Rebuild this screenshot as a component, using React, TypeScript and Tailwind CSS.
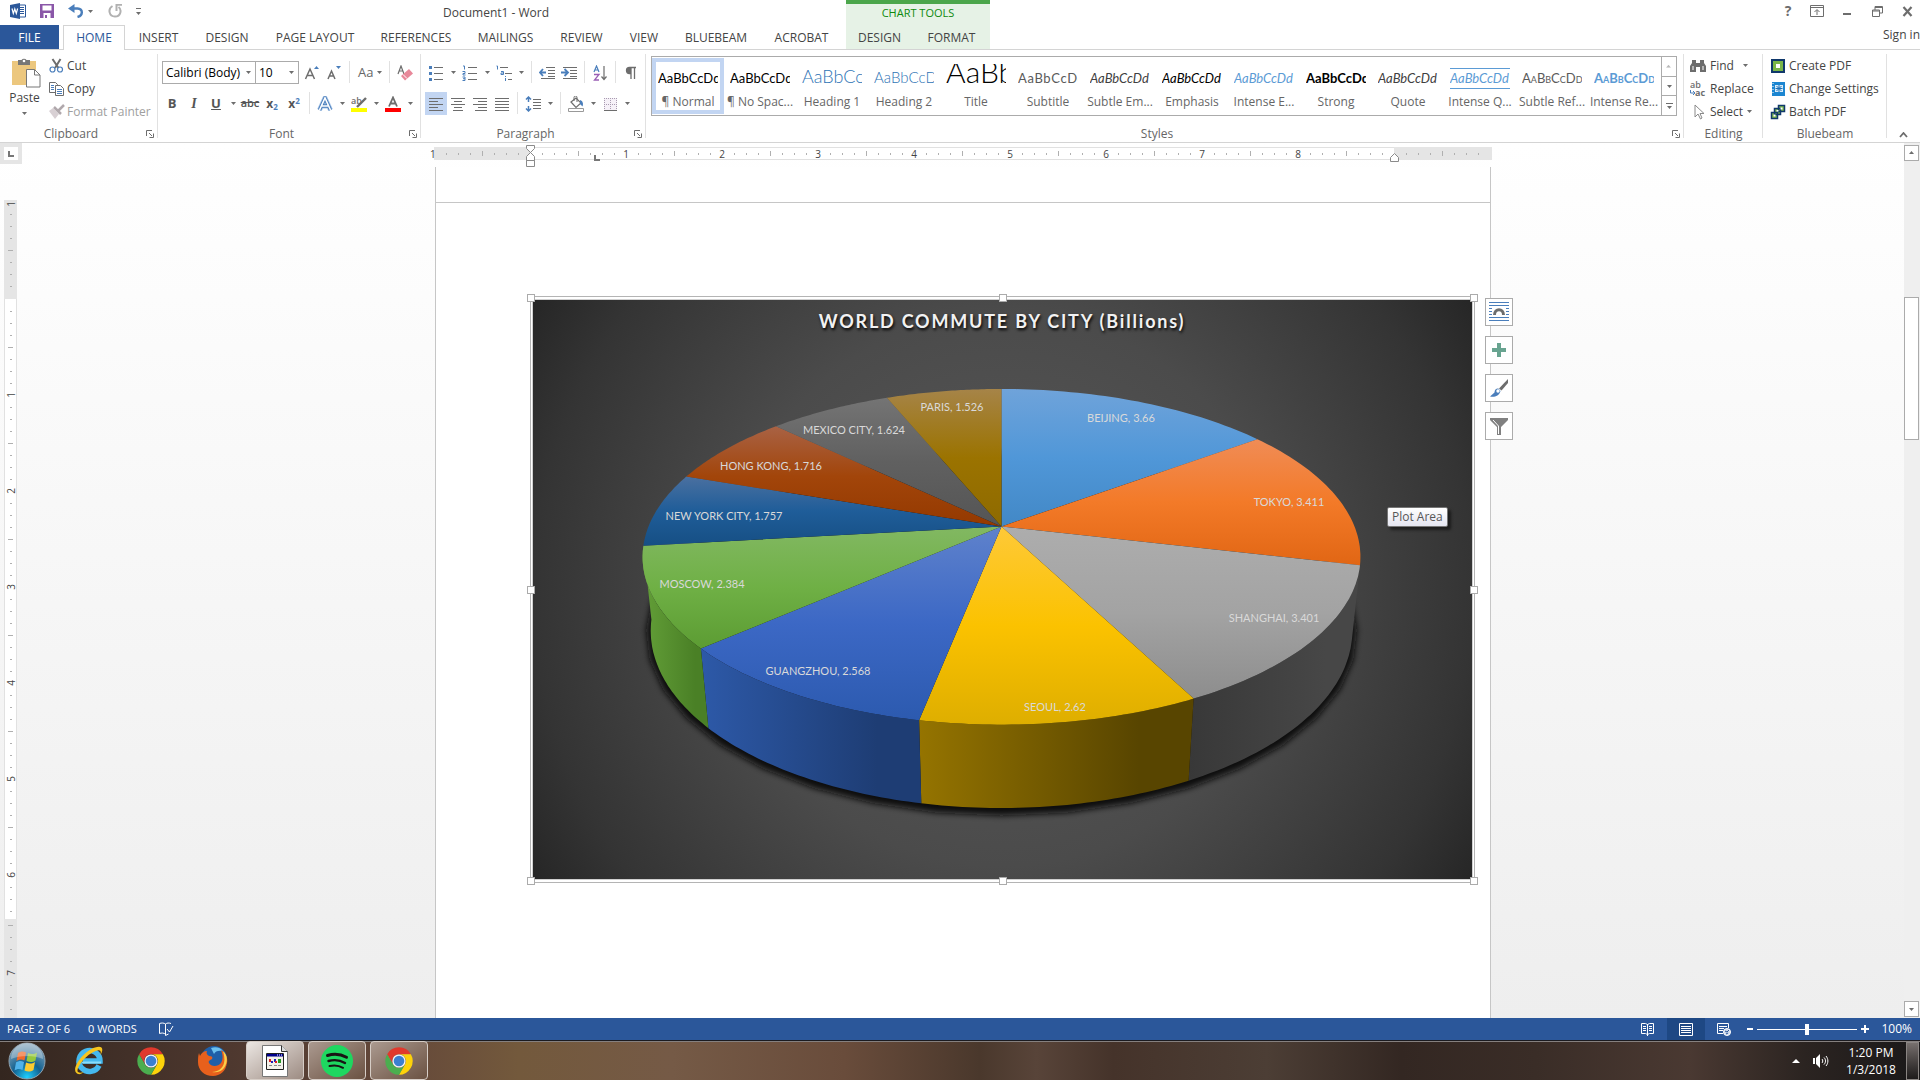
import type { ReactNode } from 'react'
import clsx from 'clsx'

const GREY = '#6d6d6d'
const BLUE = '#4a7ebb'

const tabs = [
  { label: 'INSERT', width: 'w-[67px]' },
  { label: 'DESIGN', width: 'w-[70px]' },
  { label: 'PAGE LAYOUT', width: 'w-[106px]' },
  { label: 'REFERENCES', width: 'w-24' },
  { label: 'MAILINGS', width: 'w-[83px]' },
  { label: 'REVIEW', width: 'w-[69px]' },
  { label: 'VIEW', width: 'w-14' },
  { label: 'BLUEBEAM', width: 'w-[88px]' },
  { label: 'ACROBAT', width: 'w-[83px]' },
]

const styleItems = [
  { label: '¶ Normal', look: 'text-black' },
  { label: '¶ No Spac...', look: 'text-black' },
  { label: 'Heading 1', look: 'text-[#2e74b5] text-[18px] font-light' },
  { label: 'Heading 2', look: 'text-[#2e74b5] text-[15px] font-light' },
  { label: 'Title', look: 'text-black text-[30px] font-light' },
  { label: 'Subtitle', look: 'text-[#5a5a5a] tracking-wider' },
  { label: 'Subtle Em...', look: 'text-[#404040] italic' },
  { label: 'Emphasis', look: 'text-black italic' },
  { label: 'Intense E...', look: 'text-[#5b9bd5] italic' },
  { label: 'Strong', look: 'text-black font-bold' },
  { label: 'Quote', look: 'text-[#404040] italic' },
  { label: 'Intense Q...', look: 'text-[#5b9bd5] italic', ruled: true },
  { label: 'Subtle Ref...', look: 'text-[#5a5a5a] [font-variant:small-caps]' },
  { label: 'Intense Re...', look: 'text-[#5b9bd5] font-bold [font-variant:small-caps]' },
]

// label x/y are the centre of the text inside the chart
const cities = [
  { name: 'BEIJING', value: 3.66, x: 588, y: 122, top: ['#6fa3da', '#5097d8', '#4288c6'] },
  { name: 'TOKYO', value: 3.411, x: 756, y: 206, top: ['#f08c56', '#f37a28', '#e16614'] },
  { name: 'SHANGHAI', value: 3.401, x: 741, y: 322, top: ['#adadad', '#a3a3a3', '#8d8d8d'], side: ['#383838', '#474747'] },
  { name: 'SEOUL', value: 2.62, x: 522, y: 411, top: ['#fec938', '#fbc200', '#deae00'], side: ['#957400', '#584500'] },
  { name: 'GUANGZHOU', value: 2.568, x: 285, y: 375, top: ['#5f82cc', '#3c68c5', '#2c5aaf'], side: ['#2d59a8', '#1e3d74'] },
  { name: 'MOSCOW', value: 2.384, x: 169, y: 288, top: ['#82b862', '#6fb045', '#5c9c33'], side: ['#639f38', '#4a8026'] },
  { name: 'NEW YORK CITY', value: 1.757, x: 191, y: 220, top: ['#4a70a0', '#1f5d99', '#164f84'] },
  { name: 'HONG KONG', value: 1.716, x: 238, y: 170, top: ['#a96244', '#a2450a', '#943900'] },
  { name: 'MEXICO CITY', value: 1.624, x: 321, y: 134, top: ['#747474', '#606060', '#555555'] },
  { name: 'PARIS', value: 1.526, x: 419, y: 111, top: ['#a68448', '#9b7300', '#8e6a00'] },
]

const total = cities.reduce((sum, c) => sum + c.value, 0)

// perspective projection of the unit circle, clockwise from the back
function project(angle: number, bottom = false) {
  const u = Math.sin(angle)
  const v = Math.cos(angle)
  const w = (bottom ? 1.0225 : 1) + 0.1808 * v
  const x = 468.5 + (353 * u) / w
  const y = ((bottom ? 306.2 : 226.5) - 121.4 * v) / w
  return `${x.toFixed(1)} ${y.toFixed(1)}`
}

function rim(from: number, to: number, bottom = false) {
  const steps = 40
  return Array.from({ length: steps + 1 }, (_, i) => project(from + ((to - from) * i) / steps, bottom))
}

let turned = 0
const slices = cities.map((city) => {
  const from = (turned / total) * Math.PI * 2
  turned += city.value
  const to = (turned / total) * Math.PI * 2
  return {
    ...city,
    face: `M468.5 226.5L${rim(from, to).join('L')}Z`,
    wall: `M${rim(from, to).join('L')}L${rim(to, from, true).join('L')}Z`,
  }
})

function Chart() {
  return (
    <svg viewBox="0 0 939 579" className="block h-[579px] w-full font-['Lato',sans-serif]">
      <defs>
        <radialGradient id="bg" gradientUnits="userSpaceOnUse" cx="470" cy="290" r="552">
          <stop offset="0" stopColor="#595959" />
          <stop offset="0.5" stopColor="#4b4b4b" />
          <stop offset="0.85" stopColor="#343434" />
          <stop offset="1" stopColor="#262626" />
        </radialGradient>
        <filter id="soft" x="-10%" y="-10%" width="120%" height="120%">
          <feGaussianBlur stdDeviation="3" />
        </filter>
        {slices.map((s) => (
          <linearGradient key={s.name} id={`top-${s.value}`} x1="0" y1="0" x2="0" y2="1">
            <stop offset="0" stopColor={s.top[0]} />
            <stop offset="0.5" stopColor={s.top[1]} />
            <stop offset="1" stopColor={s.top[2]} />
          </linearGradient>
        ))}
        {slices.map((s) => s.side && (
          <linearGradient key={s.name} id={`side-${s.value}`}>
            <stop offset="0" stopColor={s.side[0]} />
            <stop offset="0.8" stopColor={s.side[1]} />
          </linearGradient>
        ))}
      </defs>
      <rect width="939" height="579" fill="url(#bg)" />
      <path
        d={`M${rim(0, Math.PI * 2, true).join('L')}Z`}
        transform="translate(0 3)"
        fill="#111"
        stroke="#111"
        strokeWidth="9"
        filter="url(#soft)"
      />
      {slices.map((s) => s.side && <path key={s.name} d={s.wall} fill={`url(#side-${s.value})`} />)}
      {slices.map((s) => <path key={s.name} d={s.face} fill={`url(#top-${s.value})`} />)}
      <text
        x="469"
        y="28"
        textAnchor="middle"
        className="fill-[#f2f2f2] text-[18px] font-bold tracking-widest [text-shadow:1px_2px_3px_#000]"
      >
        WORLD COMMUTE BY CITY (Billions)
      </text>
      {slices.map((s) => (
        <text key={s.name} x={s.x} y={s.y} textAnchor="middle" className="fill-[#d9d9d9] text-[11px]">
          {s.name}, {s.value}
        </text>
      ))}
    </svg>
  )
}

function Icon({ size = 16, children }: { size?: number; children: ReactNode }) {
  return (
    <svg width={size} height={size} viewBox="0 0 16 16" fill="none" className="shrink-0" aria-hidden="true">
      {children}
    </svg>
  )
}

function Caret({ color = GREY }: { color?: string }) {
  return (
    <svg width="5" height="3" viewBox="0 0 5 3" className="shrink-0" aria-hidden="true">
      <path d="M0 0h5L2.5 3z" fill={color} />
    </svg>
  )
}

function Tool({ label, active, children }: { label: string; active?: boolean; children: ReactNode }) {
  return (
    <button
      aria-label={label}
      className={clsx('flex h-[23px] w-[22px] shrink-0 items-center justify-center', active && 'bg-[#c2d5f2]')}
    >
      {children}
    </button>
  )
}

function Drop({ label }: { label: string }) {
  return (
    <button aria-label={label} className="flex h-[23px] w-3 shrink-0 items-center justify-center">
      <Caret />
    </button>
  )
}

function Divider() {
  return <div className="mx-1 h-[22px] w-px shrink-0 bg-[#e1e1e1]" />
}

function Group({ label, width, launcher, children }: { label: string; width: string; launcher?: boolean; children: ReactNode }) {
  return (
    <section
      className={clsx(
        'relative mt-1 flex flex-col after:absolute after:top-0 after:right-0 after:bottom-1 after:w-px after:bg-[#e1e1e1]',
        width,
      )}
    >
      <div className="min-h-0 flex-1">{children}</div>
      <div className={clsx('h-4 text-center leading-[15px] text-[#666]', launcher && 'pr-4')}>{label}</div>
      {launcher && (
        <button aria-label={`${label} settings`} className="absolute right-1 bottom-1">
          <svg width="8" height="8" viewBox="0 0 8 8" fill="none" stroke={GREY}>
            <path d="M.5 6V.5H6M3 3l3 3M7.500 3.500v4h-4" />
          </svg>
        </button>
      )}
    </section>
  )
}

function TitleBar() {
  return (
    <div className="flex h-[25px] items-start">
      <div className="flex w-[443px] items-center pt-[3px] pl-[10px]">
        <svg width="16" height="16" viewBox="0 0 16 16" aria-hidden="true">
          <path d="M8 2h7.500v12H8z" fill="#fff" stroke="#2b579a" />
          <path d="M10 4.500h4M10 6.500h4M10 8.500h4M10 10.500h4" stroke="#2b579a" />
          <path d="M0 2l10-2v16L0 14z" fill="#2b579a" />
          <path d="M2 5.500l1.300 5 1.500-4.500 1.500 4.500 1.300-5" fill="none" stroke="#fff" strokeWidth="1.200" />
        </svg>
        <button aria-label="Save" className="ml-[14px]">
          <svg width="14" height="14" viewBox="0 0 14 14">
            <path d="M0 0h14v14H0z" fill="#8a57a8" />
            <path d="M2.500 1.500h9v5h-9zM3.500 9h7v5h-7z" fill="#fff" />
            <path d="M5 11h2v3H5z" fill="#8a57a8" />
          </svg>
        </button>
        <button aria-label="Undo" className="ml-[14px]">
          <svg width="16" height="14" viewBox="0 0 16 14" fill="none">
            <path d="M2 4.500h7.500c6 .5 5.500 7 0 8.500" stroke={BLUE} strokeWidth="2.400" />
            <path d="M6.500 0v9L0 4.500z" fill={BLUE} />
          </svg>
        </button>
        <button aria-label="Undo list" className="w-3 pl-1"><Caret /></button>
        <button aria-label="Repeat" className="ml-3">
          <svg width="14" height="14" viewBox="0 0 14 14" fill="none">
            <path d="M4.500 2C-.5 5 1 12.500 7 12.500c6 0 7-7 3.500-9.500" stroke="#b1b1b1" strokeWidth="2" />
            <path d="M7.500 0H14v1.800H9.500V7H7.500z" fill="#b1b1b1" />
          </svg>
        </button>
        <button aria-label="Customize toolbar" className="ml-[14px] flex flex-col items-center gap-[3px]">
          <span className="h-px w-[5px] bg-[#6d6d6d]" />
          <Caret />
        </button>
      </div>
      <h1 className="flex-1 pt-[5px] text-[12px] leading-4 text-[#444]">Document1 - Word</h1>
      <div className="flex items-center gap-3 pt-1 pr-1 text-[#6d6d6d]">
        <button aria-label="Help" className="w-4 text-[14px] leading-[14px] font-bold">?</button>
        <button aria-label="Ribbon display options" className="w-[18px] pl-[2px]">
          <svg width="14" height="12" viewBox="0 0 14 12" fill="none" stroke={GREY}>
            <path d="M.5.500h13v11H.5zM.5 2.500h13M7 10V5M4.500 7L7 4.500 9.500 7" />
          </svg>
        </button>
        <button aria-label="Minimize" className="flex h-3 w-[18px] items-end justify-center pb-[2px]"><span className="h-[2px] w-2 bg-[#6d6d6d]" /></button>
        <button aria-label="Restore" className="w-[18px] pl-1">
          <svg width="11" height="11" viewBox="0 0 11 11" fill="none" stroke={GREY}>
            <path d="M.5 4h7v6.500h-7zM.5 5h7M3 4V.500h7.500V7H8M3 1.500h7" />
          </svg>
        </button>
        <button aria-label="Close" className="w-[18px] pl-1">
          <svg width="11" height="11" viewBox="0 0 11 11" fill="none">
            <path d="M1.500 1l8 9M9.500 1l-8 9" stroke={GREY} strokeWidth="2.200" />
          </svg>
        </button>
      </div>
    </div>
  )
}

function TabRow() {
  return (
    <nav className="relative flex h-[25px] border-b border-[#d4d4d4] text-[12px] text-[#444]">
      <button className="w-[59px] bg-[#2b579a] pt-px text-white">FILE</button>
      <button className="ml-1 -mb-px w-[62px] border border-b-0 border-[#d4d4d4] bg-white text-[#2b579a]">HOME</button>
      {tabs.map((t) => (
        <button key={t.label} className={clsx('pt-px', t.width)}>{t.label}</button>
      ))}
      <div className="absolute top-[-25px] left-[846px] flex h-[49px] w-36 flex-col border-t-4 border-[#4ba64b] bg-[#e6f2e6]">
        <div className="h-[21px] pt-[1px] text-center text-[11px] leading-4 text-[#0f8a0f]">CHART TOOLS</div>
        <div className="flex flex-1">
          <button className="w-[67px] pt-px">DESIGN</button>
          <button className="flex-1 pt-px">FORMAT</button>
        </div>
      </div>
      <a href="#signin" className="ml-auto pt-[2px] leading-4">Sign in</a>
    </nav>
  )
}

function ClipboardGroup() {
  return (
    <Group label="Clipboard" width="w-[158px]" launcher>
      <div className="flex">
        <button className="flex w-[49px] flex-col items-center pt-[3px] text-[#444]">
          <svg width="29" height="31" viewBox="0 0 29 31" fill="none" className="ml-1">
            <path d="M0 4h24v24H0z" fill="#ecc77e" />
            <path d="M6 8V3h3.500a3 3 0 0 1 5 0H18v5z" fill="#777" />
            <circle cx="12" cy="4" r="1.300" fill="#fff" />
            <path d="M14.500 12.500h8l5.500 5.500v12H14.500z" fill="#fff" stroke="#777" />
            <path d="M22.500 12.500V18H28" stroke="#777" />
          </svg>
          <span className="text-[12px] leading-[20px]">Paste</span>
          <span className="pt-[4px]"><Caret /></span>
        </button>
        <div className="flex flex-col text-[#444]">
          <button className="flex h-[23px] items-center gap-[2px]">
            <Icon>
              <path d="M3.500 1l6 9M11.500 1L6 10" stroke={GREY} strokeWidth="2" />
              <circle cx="3.500" cy="11.500" r="2.500" stroke={BLUE} strokeWidth="1.200" />
              <circle cx="11" cy="11.500" r="2.500" stroke={BLUE} strokeWidth="1.200" />
            </Icon>
            Cut
          </button>
          <button className="flex h-[23px] items-center gap-[2px]">
            <Icon>
              <path d="M.5 1.500h6l2 2v8h-8z" fill="#fff" stroke={GREY} />
              <path d="M6.500 4.500h5l3 3v7h-8z" fill="#fff" stroke={GREY} />
              <path d="M2 4.500h3M2 6.500h3M2 8.500h3M8 8.500h5M8 10.500h5M8 12.500h5" stroke={BLUE} />
            </Icon>
            Copy
          </button>
          <button className="flex h-[23px] items-center gap-[2px] text-[#a0a0a0]">
            <Icon>
              <path d="M0 7l4-3 6 6-4 5z" fill="#d8d0d4" />
              <path d="M5 3l7 7M9 7l6-6" stroke="#b0a8ac" strokeWidth="2.500" />
            </Icon>
            Format Painter
          </button>
        </div>
      </div>
    </Group>
  )
}

function FontGroup() {
  return (
    <Group label="Font" width="w-[263px]" launcher>
      <div className="mt-[7px] flex h-[23px] pl-1">
        <label className="relative flex">
          <select aria-label="Font name" className="h-[23px] w-[94px] appearance-none border border-[#ababab] bg-white pl-[3px] text-[12px] text-black">
            <option>Calibri (Body)</option>
          </select>
          <span className="pointer-events-none absolute top-[10px] right-[5px]"><Caret /></span>
        </label>
        <label className="relative -ml-px flex">
          <select aria-label="Font size" className="h-[23px] w-[44px] appearance-none border border-[#ababab] bg-white pl-[3px] text-[12px] text-black">
            <option>10</option>
          </select>
          <span className="pointer-events-none absolute top-[10px] right-[5px]"><Caret /></span>
        </label>
        <div className="w-[2px]" />
        <Tool label="Grow font">
          <Icon>
            <path d="M1.500 14L6 4l4.500 10M3.300 10.500h5.400" stroke={GREY} strokeWidth="1.500" />
            <path d="M10 4l2.500-3L15 4z" fill={BLUE} />
          </Icon>
        </Tool>
        <Tool label="Shrink font">
          <Icon>
            <path d="M2 14L5.500 6 9 14M3.500 11h4" stroke={GREY} strokeWidth="1.500" />
            <path d="M10 1h5l-2.500 3z" fill={BLUE} />
          </Icon>
        </Tool>
        <Divider />
        <button className="ml-1 text-[13px] text-[#666]">Aa</button>
        <Drop label="Change case" />
        <Divider />
        <Tool label="Clear formatting">
          <Icon>
            <path d="M1 9L4 1l3 8M2 6h4" stroke={GREY} strokeWidth="1.200" />
            <path d="M4 11l8-7 4 4.500-8 7z" fill="#e8889a" />
            <path d="M6 9.500l4 4" stroke="#fff" />
          </Icon>
        </Tool>
      </div>
      <div className="mt-2 flex h-[23px] pl-[3px] text-[#555]">
        <Tool label="Bold"><span className="text-[13px] font-bold">B</span></Tool>
        <Tool label="Italic"><span className="font-['Liberation_Serif',serif] text-[14px] font-bold italic">I</span></Tool>
        <Tool label="Underline"><span className="text-[13px] font-bold underline">U</span></Tool>
        <Drop label="Underline style" />
        <Tool label="Strikethrough"><span className="text-[11px] font-semibold line-through">abc</span></Tool>
        <Tool label="Subscript"><span className="text-[12px] font-bold">x<sub className="text-[8px] text-[#4a7ebb]">2</sub></span></Tool>
        <Tool label="Superscript"><span className="text-[12px] font-bold">x<sup className="text-[8px] text-[#4a7ebb]">2</sup></span></Tool>
        <Divider />
        <Tool label="Text effects">
          <Icon>
            <path d="M2.500 14L8 2l5.500 12M5 10h6" stroke="#a9c6e8" strokeWidth="5" strokeLinejoin="round" />
            <path d="M2.500 14L8 2l5.500 12M5 10h6" stroke={BLUE} strokeWidth="3.400" />
            <path d="M2.500 14L8 2l5.500 12M5 10h6" stroke="#fff" strokeWidth="1.600" />
          </Icon>
        </Tool>
        <Drop label="Text effects list" />
        <Tool label="Highlight">
          <Icon>
            <text x="0" y="8" fontSize="9" fontWeight="600" fill={GREY}>ab</text>
            <path d="M15 2L8 9l-2 2" stroke={GREY} strokeWidth="2.400" />
            <path d="M0 12h16v4H0z" fill="#ffff00" />
          </Icon>
        </Tool>
        <Drop label="Highlight colour" />
        <Tool label="Font colour">
          <Icon>
            <path d="M4 10.500L8 1.500l4 9M5.500 7.500h5" stroke={GREY} strokeWidth="1.800" />
            <path d="M0 12h16v4H0z" fill="#ff0000" />
          </Icon>
        </Tool>
        <Drop label="Font colour list" />
      </div>
    </Group>
  )
}

function ParagraphGroup() {
  return (
    <Group label="Paragraph" width="w-[225px]" launcher>
      <div className="mt-[7px] flex h-[23px] pl-1">
        <Tool label="Bullets">
          <Icon>
            <path d="M6 2.500h9M6 8.500h9M6 14.500h9" stroke={GREY} />
            <path d="M1 1h3v3H1zM1 7h3v3H1zM1 13h3v3H1z" fill={BLUE} />
          </Icon>
        </Tool>
        <Drop label="Bullet library" />
        <Tool label="Numbering">
          <Icon>
            <path d="M6 2.500h9M6 8.500h9M6 14.500h9" stroke={GREY} />
            <path d="M1 1h1.500v3.500M.5 6.500H3v2H1V10h2.500M.5 12H3v3.500H.5M1 13.700h2" stroke={BLUE} />
          </Icon>
        </Tool>
        <Drop label="Numbering library" />
        <Tool label="Multilevel list">
          <Icon>
            <path d="M4 2.500h8M9 8.500h7M12 14.500h4" stroke={GREY} />
            <path d="M.5 1h1v3.500M5 6.500h2.500v3H5V8h2.500M9.500 11v1M9.500 13v3" stroke={BLUE} />
          </Icon>
        </Tool>
        <Drop label="Multilevel library" />
        <Divider />
        <Tool label="Decrease indent">
          <Icon>
            <path d="M7 2.500h9M9 5.500h7M9 8.500h7M9 11.500h7M2 13.500h14" stroke={GREY} />
            <path d="M7 7.500H1M4 4L1 7.500 4 11" stroke={BLUE} strokeWidth="1.800" />
          </Icon>
        </Tool>
        <Tool label="Increase indent">
          <Icon>
            <path d="M2 2.500h14M9 5.500h7M9 8.500h7M9 11.500h7M2 13.500h14" stroke={GREY} />
            <path d="M0 7.500h6M3.500 4L7 7.500 3.500 11" stroke={BLUE} strokeWidth="1.800" />
          </Icon>
        </Tool>
        <Divider />
        <Tool label="Sort">
          <Icon>
            <path d="M2 7l2.500-6L7 7M3 5h3" stroke={BLUE} strokeWidth="1.200" />
            <path d="M2 9.500h5L2.500 15H7" stroke="#9a5fb5" strokeWidth="1.300" />
            <path d="M12 1v13M9.500 11.500L12 14.500l2.500-3" stroke={GREY} strokeWidth="1.200" />
          </Icon>
        </Tool>
        <Divider />
        <Tool label="Show marks">
          <Icon>
            <path d="M13 2.500H6.500a3 3 0 0 0 0 6H8V14M8 2v12M11.500 2.500V14" stroke={GREY} strokeWidth="1.300" />
            <path d="M8 2.500H6.500a3 3 0 0 0 0 6H8z" fill={GREY} />
          </Icon>
        </Tool>
      </div>
      <div className="mt-2 flex h-[23px] pl-1">
        <Tool label="Align left" active>
          <Icon><path d="M1 2.500h14M1 5.500h9M1 8.500h14M1 11.500h9M1 14.500h14" stroke={GREY} /></Icon>
        </Tool>
        <Tool label="Centre">
          <Icon><path d="M1 2.500h14M4 5.500h8M1 8.500h14M4 11.500h8M3 14.500h10" stroke={GREY} /></Icon>
        </Tool>
        <Tool label="Align right">
          <Icon><path d="M1 2.500h14M6 5.500h9M1 8.500h14M6 11.500h9M3 14.500h12" stroke={GREY} /></Icon>
        </Tool>
        <Tool label="Justify">
          <Icon><path d="M1 2.500h14M1 5.500h14M1 8.500h14M1 11.500h14M1 14.500h14" stroke={GREY} /></Icon>
        </Tool>
        <Divider />
        <Tool label="Line spacing">
          <Icon>
            <path d="M8 3.500h8M8 6.500h8M8 9.500h8M8 12.500h8" stroke={GREY} />
            <path d="M3.500 1v5M1 3.500L3.500 1 6 3.500M3.500 10v5M1 12.500L3.500 15 6 12.500" stroke={BLUE} strokeWidth="1.500" />
          </Icon>
        </Tool>
        <Drop label="Line spacing list" />
        <Divider />
        <Tool label="Shading">
          <Icon>
            <path d="M3 6l5-4 5 5-5 4.500z" stroke={GREY} strokeWidth="1.200" />
            <path d="M6 5V1.500a1.500 1.500 0 0 1 3 0V6" stroke={GREY} />
            <path d="M12 4c3 1 3.500 4 2.500 6.500L12 8z" fill={BLUE} />
            <path d="M.5 12.500h15v3H.5z" fill="#fff" stroke="#999" />
          </Icon>
        </Tool>
        <Drop label="Shading colour" />
        <Tool label="Borders">
          <Icon>
            <path d="M2 2h13v12H2z" fill="#f6f1f8" />
            <path d="M2 2.500h13M2 8.500h13M2.500 2v12M8.500 2v12M14.500 2v12" stroke="#a89bb0" strokeDasharray="1 1" />
            <path d="M2 14.500h13" stroke={GREY} />
          </Icon>
        </Tool>
        <Drop label="Border list" />
      </div>
    </Group>
  )
}

function StylesGroup() {
  return (
    <Group label="Styles" width="min-w-0 flex-1" launcher>
      <div className="mt-[2px] mr-[7px] ml-[5px] flex h-[60px] border border-[#ababab]">
        <div className="flex min-w-0 flex-1 overflow-hidden">
          {styleItems.map((s, i) => (
            <button
              key={s.label}
              className={clsx('mt-px h-14 w-[72px] shrink-0 border-4 px-[2px]', i === 0 ? 'border-[#c2d5f2]' : 'border-transparent')}
            >
              <div className="relative mt-[2px] h-[27px] overflow-hidden text-left font-['Lato',sans-serif] text-[13px] leading-[29px] whitespace-nowrap">
                <span className={clsx('leading-[0]', s.look)}>AaBbCcDd</span>
                {s.ruled && <span className="absolute inset-x-0 top-1 h-[21px] border-y border-[#5b9bd5]" />}
              </div>
              <div className="flex justify-center pt-[2px] leading-[17px] whitespace-nowrap text-[#666]">{s.label}</div>
            </button>
          ))}
        </div>
        <div className="flex w-[15px] shrink-0 flex-col border-l border-[#ababab]">
          <button aria-label="Scroll styles up" className="flex flex-1 rotate-180 items-center justify-center"><Caret color="#b8b8b8" /></button>
          <button aria-label="Scroll styles down" className="flex flex-1 items-center justify-center border-y border-[#ababab]"><Caret /></button>
          <button aria-label="More styles" className="flex flex-1 flex-col items-center justify-center gap-[2px]">
            <span className="h-px w-[7px] bg-[#6d6d6d]" />
            <Caret />
          </button>
        </div>
      </div>
    </Group>
  )
}

function EditingGroups() {
  return (
    <>
      <Group label="Editing" width="w-[79px]">
        <div className="flex flex-col pl-[6px] text-[#444]">
          <button className="flex h-[23px] items-center gap-1">
            <Icon>
              <path d="M2 2h4v3h4V2h4v3l2 3v6h-6V9H6v5H0V8l2-3z" fill={GREY} />
              <path d="M3 8v4M13 8v4" stroke="#fff" />
            </Icon>
            Find
            <span className="pl-[5px]"><Caret /></span>
          </button>
          <button className="flex h-[23px] items-center gap-1">
            <Icon>
              <text x="0" y="7" fontSize="9" fontWeight="600" fill={GREY}>ab</text>
              <text x="5" y="15" fontSize="9" fontWeight="700" fill={GREY}>ac</text>
              <path d="M.5 9v3h4M3 10l2 2-2 2" stroke={BLUE} />
            </Icon>
            Replace
          </button>
          <button className="flex h-[23px] items-center gap-1">
            <Icon><path d="M5 1v12l3-3 2.500 5 1.500-1-2-4.500h4z" stroke="#8a8a8a" /></Icon>
            Select
            <Caret />
          </button>
        </div>
      </Group>
      <Group label="Bluebeam" width="w-[124px]">
        <div className="flex flex-col pl-[7px] text-[#444]">
          <button className="flex h-[23px] items-center gap-[3px]">
            <Icon>
              <path d="M1 1h14v14H1z" fill="#10386b" />
              <path d="M3 3h10v10H3z" fill="#7ab648" />
              <path d="M6 6h4v4H6z" fill="#fff" />
            </Icon>
            Create PDF
          </button>
          <button className="flex h-[23px] items-center gap-[3px]">
            <Icon>
              <path d="M2 1h13v14H2z" fill="#1c86d1" />
              <path d="M5 4h8v7H5z" fill="#d8ecfa" />
              <path d="M9 4v7M5.500 7.500h7M6.500 5l5 5M11.500 5l-5 5" stroke="#1c6fb5" />
              <path d="M3 2v12" stroke="#fff" strokeDasharray="1 2" />
            </Icon>
            Change Settings
          </button>
          <button className="flex h-[23px] items-center gap-[3px]">
            <Icon>
              <path d="M8.500 1.500h6v6h-6zM4.500 4.500h6v6h-6zM1.500 8.500h6v6h-6z" fill="#7ab648" stroke="#10386b" strokeWidth="1.500" />
              <path d="M3.500 10.500h2v2h-2zM10.500 3.500h2v2h-2zM6.500 6h2v1.500h-2z" fill="#fff" />
            </Icon>
            Batch PDF
          </button>
        </div>
      </Group>
      <div className="flex w-[33px] items-end justify-center pb-1">
        <button aria-label="Collapse ribbon">
          <svg width="9" height="6" viewBox="0 0 9 6" fill="none"><path d="M1 5l3.500-4L8 5" stroke={GREY} strokeWidth="1.800" /></svg>
        </button>
      </div>
    </>
  )
}

// one cell per eighth of an inch, numbered on the whole inch
function Ticks({ count, start = 1, vertical }: { count: number; start?: number; vertical?: boolean }) {
  return (
    <>
      {Array.from({ length: count }, (_, i) => i + start).map((n) => (
        <span
          key={n}
          className={clsx(
            'flex shrink-0 items-center justify-center text-[10px] leading-none text-[#444]',
            vertical ? 'h-3 w-full' : 'h-full w-3',
          )}
        >
          {n % 8 === 0 ? (
            <span className={vertical ? '-rotate-90' : ''}>{n / 8}</span>
          ) : (
            <span
              className={clsx(
                'bg-[#b0b0b0]',
                vertical ? 'h-px' : 'w-px',
                n % 4 === 0 ? (vertical ? 'w-[5px]' : 'h-[5px]') : vertical ? 'w-[2px]' : 'h-[2px]',
              )}
            />
          )}
        </span>
      ))}
    </>
  )
}

function HorizontalRuler() {
  return (
    <div className="relative mx-auto mt-1 flex h-[13px] w-[1058px]">
      <div className="flex w-24 bg-[#e5e5e5]">
        <span className="-ml-1 flex w-[10px] items-center text-[10px] leading-none text-[#444]">1</span>
        <Ticks count={7} />
      </div>
      <div className="flex w-[864px] overflow-hidden border-y border-[#e1e1e1] bg-white pl-[6px]"><Ticks count={71} /></div>
      <div className="flex flex-1 overflow-hidden bg-[#e5e5e5] pl-[6px]"><Ticks count={7} /></div>
      <svg width="9" height="22" viewBox="0 0 9 22" fill="#fff" stroke="#8a8a8a" className="absolute -top-[2px] left-[92px]">
        <path d="M.5.500h8v3l-4 4-4-4zM.5 15.500v-4l4-4 4 4v4zM.5 15.500h8v6h-8z" />
      </svg>
      <svg width="9" height="9" viewBox="0 0 9 9" fill="#fff" stroke="#8a8a8a" className="absolute top-[6px] left-[956px]">
        <path d="M.5 8.500v-4l4-4 4 4v4z" />
      </svg>
      <span className="absolute top-2 left-[160px] h-[6px] w-[6px] border-b-2 border-l-2 border-[#777]" />
    </div>
  )
}

function VerticalRuler() {
  return (
    <div className="mt-[33px] ml-1 flex w-[13px] flex-col overflow-hidden">
      <div className="flex h-[99px] shrink-0 flex-col bg-[#e5e5e5]">
        <span className="flex h-2 shrink-0 items-center justify-center text-[10px] leading-none text-[#444]"><span className="-rotate-90">1</span></span>
        <Ticks count={7} vertical />
      </div>
      <div className="flex h-[620px] shrink-0 flex-col overflow-hidden border-x border-[#e1e1e1] bg-white pt-[6px]"><Ticks count={51} vertical /></div>
      <div className="flex flex-1 flex-col overflow-hidden bg-[#e5e5e5]"><Ticks count={9} start={52} vertical /></div>
    </div>
  )
}

function ChartButtons() {
  const box = 'flex size-7 items-center justify-center border border-[#ababab] bg-white'
  return (
    <div className="absolute top-px left-[954px] flex flex-col gap-[10px]">
      <button aria-label="Layout options" className={box}>
        <svg width="20" height="20" viewBox="0 0 20 20" fill="none" stroke={BLUE}>
          <path d="M0 .5h20M0 3.500h20M0 6.500h3M0 9.500h3M0 12.500h3M17 6.500h3M17 9.500h3M17 12.500h3M0 15.500h20M0 18.500h20" />
          <path d="M5.500 13c0-7 9-7 9 0" stroke={GREY} strokeWidth="3" />
        </svg>
      </button>
      <button aria-label="Chart elements" className={box}>
        <svg width="14" height="14" viewBox="0 0 14 14"><path d="M5 0h4v5h5v4H9v5H5V9H0V5h5z" fill="#68a490" /></svg>
      </button>
      <button aria-label="Chart styles" className={box}>
        <svg width="18" height="18" viewBox="0 0 18 18" fill="none">
          <path d="M18 0v4l-6.500 7.500-2.500-2z" fill={GREY} />
          <path d="M8.500 9.500c-3 0-3.500 1-4 4L0 17.500c4 .5 9 .5 10.500-5.500z" fill={BLUE} />
          <circle cx="8" cy="12" r="1.700" fill="#fff" />
        </svg>
      </button>
      <button aria-label="Chart filters" className={box}>
        <svg width="18" height="17" viewBox="0 0 18 17"><path d="M0 0h18v2l-7 7v8H7V9L0 2z" fill="#808080" /><path d="M3 2l5.500 6v8" fill="none" stroke="#fff" /></svg>
      </button>
    </div>
  )
}

const handles = [
  '-top-[3px] -left-1',
  '-top-[3px] left-1/2 -ml-1',
  '-top-[3px] -right-1',
  'top-1/2 -mt-1 -left-1',
  'top-1/2 -mt-1 -right-1',
  '-bottom-[3px] -left-1',
  '-bottom-[3px] left-1/2 -ml-1',
  '-bottom-[3px] -right-1',
]

function Document() {
  return (
    <main className="flex min-h-0 flex-1 bg-linear-to-b from-white to-[#eeeeee]">
      <div className="flex min-w-0 flex-1 flex-col overflow-hidden">
        <div className="flex h-6 shrink-0">
          <button aria-label="Tab selector" className="flex h-[21px] w-[22px] shrink-0 items-center justify-center border-4 border-[#e5e5e5] bg-white">
            <span className="h-[6px] w-[6px] border-b-2 border-l-2 border-[#777]" />
          </button>
          <div className="min-w-0 flex-1"><HorizontalRuler /></div>
        </div>
        <div className="flex min-h-0 flex-1">
          <div className="flex w-[22px] shrink-0"><VerticalRuler /></div>
          <div className="min-w-0 flex-1 overflow-hidden">
            <div className="mx-auto h-full w-[1056px] border-x border-[#c6c6c6] bg-white">
              <div className="h-9 border-b border-[#c6c6c6]" />
              <div className="relative mt-[93px] ml-[94px] w-[945px] border border-[#b4b4b4] px-px py-[2px]">
                <div className="border border-[#d0d0d0]"><Chart /></div>
                {handles.map((pos) => (
                  <span key={pos} className={clsx('absolute size-2 border border-[#ababab] bg-white', pos)} />
                ))}
                <ChartButtons />
                <div
                  role="tooltip"
                  className="absolute top-[210px] left-[856px] rounded-xs border border-[#767676] bg-linear-to-b from-white to-[#e4e5f0] px-1 text-[12px] leading-[18px] text-[#575757] shadow-[3px_3px_3px_rgba(0,0,0,0.500)]"
                >
                  Plot Area
                </div>
              </div>
            </div>
          </div>
        </div>
      </div>
      <div className="flex w-4 shrink-0 flex-col bg-[#efefef] pt-[2px] pb-px">
        <button aria-label="Scroll up" className="flex h-4 w-[15px] rotate-180 items-center justify-center border border-[#ababab] bg-white"><Caret /></button>
        <div className="mt-[136px] h-[143px] w-[15px] border border-[#ababab] bg-white" />
        <button aria-label="Scroll down" className="mt-auto flex h-4 w-[15px] items-center justify-center border border-[#ababab] bg-white"><Caret /></button>
      </div>
    </main>
  )
}

function StatusBar() {
  return (
    <div className="flex h-[22px] shrink-0 items-center bg-[#2b579a] pr-2 pl-[7px] text-white">
      <span className="w-[81px] text-[11px]">PAGE 2 OF 6</span>
      <span className="w-[71px] text-[11px]">0 WORDS</span>
      <button aria-label="Proofing">
        <svg width="15" height="14" viewBox="0 0 15 14" fill="none" stroke="#fff">
          <path d="M6.500 2C5 .8 2.500.8.500 1.500v10c2-.7 4.500-.7 6 .700M6.500 2v11.500M6.500 2C8 .8 10 .8 12 1.500M6.500 13.500l3-1.500M8 7l2.500 3L14 4" />
        </svg>
      </button>
      <div className="ml-auto flex h-full items-center">
        <button aria-label="Read mode" className="flex h-full w-[38px] items-center justify-center">
          <svg width="14" height="13" viewBox="0 0 14 13" fill="none" stroke="#fff">
            <path d="M6.500 1.500L4.500.500h-4v10h4l2 1 2-1h4V.500h-4zM6.500 1v12M2 3.500h3M2 5.500h3M2 7.500h3M8 3.500h3M8 5.500h3M8 7.500h3" />
          </svg>
        </button>
        <button aria-label="Print layout" className="flex h-full w-[38px] items-center justify-center bg-[#1e4884]">
          <svg width="14" height="13" viewBox="0 0 14 13" fill="none" stroke="#fff"><path d="M.5.500h13v12H.5zM2 3.500h10M2 5.500h10M2 7.500h10M2 9.500h10" /></svg>
        </button>
        <button aria-label="Web layout" className="flex h-full w-[38px] items-center justify-center">
          <svg width="14" height="13" viewBox="0 0 14 13" fill="none" stroke="#fff">
            <path d="M6 10.500H.5V.500h11V5M2 3.500h8M2 5.500h5M2 7.500h4" />
            <circle cx="10" cy="9" r="3.500" fill="#c9d6ea" />
            <path d="M8 8l2 1 2-2M9 11l2-1" stroke="#2b579a" />
          </svg>
        </button>
        <button aria-label="Zoom out" className="ml-1 flex h-full w-[10px] items-center"><span className="h-[2px] w-[6px] bg-white" /></button>
        <input
          type="range"
          aria-label="Zoom"
          defaultValue="50"
          className="h-[11px] w-[100px] appearance-none bg-[linear-gradient(#fff,#fff)] bg-[length:100%_1px] bg-center bg-no-repeat [&::-webkit-slider-thumb]:h-[11px] [&::-webkit-slider-thumb]:w-1 [&::-webkit-slider-thumb]:appearance-none [&::-webkit-slider-thumb]:bg-white"
        />
        <button aria-label="Zoom in" className="ml-1 w-5">
          <svg width="8" height="8" viewBox="0 0 8 8" stroke="#fff" strokeWidth="2"><path d="M0 4h8M4 0v8" /></svg>
        </button>
        <span>100%</span>
      </div>
    </div>
  )
}

function ChromeLogo() {
  return (
    <svg width="30" height="30" viewBox="0 0 48 48" aria-hidden="true">
      <path d="M24 2A22 22 0 0 1 43 13H24A11 11 0 0 0 14.500 29.500L5 13A22 22 0 0 1 24 2z" fill="#e0392d" />
      <path d="M43 13A22 22 0 0 1 24 46L33.500 29.500A11 11 0 0 0 24 13z" fill="#fdd20a" />
      <path d="M5 13L14.500 29.500A11 11 0 0 0 33.500 29.500L24 46A22 22 0 0 1 5 13z" fill="#4bae4f" />
      <circle cx="24" cy="24" r="10.500" fill="#f4f4f4" />
      <circle cx="24" cy="24" r="8.500" fill="#3b7fd0" />
    </svg>
  )
}

function Taskbar() {
  const running = 'flex h-[39px] w-[58px] items-center justify-center rounded-sm border border-[#d6cdc6] bg-linear-to-br'
  return (
    <footer className="flex h-10 shrink-0 items-center border-t border-[#1b1b20] bg-[linear-gradient(90deg,#33261f_0%,#4e382f_12%,#65493a_21%,#73593c_27%,#755a46_35%,#694c3b_44%,#4a382c_51%,#584439_54%,#45332a_58%,#4c3e35_66%,#332722_73%,#3a2d27_80%,#4a3932_88%,#2b2421_94%,#1a1819_100%)] shadow-[inset_0_1px_0_#85807f]">
      <button aria-label="Start" className="ml-2 w-[38px]">
        <svg width="38" height="38" viewBox="0 0 38 38">
          <defs>
            <radialGradient id="orb" cx="0.500" cy="0.950" r="0.900">
              <stop offset="0" stopColor="#1fd0ff" />
              <stop offset="0.450" stopColor="#12608f" />
              <stop offset="1" stopColor="#86a6bd" />
            </radialGradient>
          </defs>
          <circle cx="19" cy="19" r="18" fill="url(#orb)" stroke="#92a2ae" />
          <path d="M10 11c3-2 5-2 8-.5l-1.500 8c-3-1.500-5-1.500-8 .5z" fill="#ee6a2c" />
          <path d="M20 11c3 1.500 6 1.500 9-.5l-1.500 8c-3 2-6 2-9 .5z" fill="#95c83d" />
          <path d="M8 20.500c3-2 5-2 8-.5l-1.500 8c-3-1.500-5-1.500-8 .5z" fill="#4fb2ea" />
          <path d="M18 20.500c3 1.500 6 1.500 9-.5l-1.500 8c-3 2-6 2-9 .5z" fill="#fccb2f" />
          <path d="M3 17a16 16 0 0 1 32 0c-9-4-23-4-32 0z" fill="#fff" opacity="0.300" />
        </svg>
      </button>
      <button aria-label="Internet Explorer" className="ml-[27px]">
        <svg width="32" height="32" viewBox="0 0 32 32" fill="none">
          <path d="M26 20.500A10.500 10.500 0 1 1 27 16H10" stroke="#45b8ee" strokeWidth="5.500" />
          <path d="M9 17.500h19" stroke="#8adcfa" strokeWidth="2" />
          <path d="M5 29C-4 26 10 6 22 2.500c8-2.500 9 2 5 8 2-5 0-6.500-4.500-4.500C12 10 2 24 5 27c2 1.500 4 .5 6-.5-2 2-4 3-6 2.500z" fill="#f7c51e" />
        </svg>
      </button>
      <button aria-label="Chrome" className="ml-[31px]"><ChromeLogo /></button>
      <button aria-label="Firefox" className="ml-[31px]">
        <svg width="32" height="32" viewBox="0 0 32 32">
          <circle cx="17" cy="14" r="13" fill="#1f5fa8" />
          <path d="M14 3c5-2 10 0 12 3-4-1-8 0-9 3z" fill="#6cc0ee" />
          <path d="M2 8l1 3c1-3 4-5 7-5-1 2 0 4 2 5 3 0 4 1 3 3-2 1-4 2-3 4 2 4 9 4 12 0 3-5 1-10 0-13 5 3 7 8 6 13-1 8-7 13-14 13C7 31 1 25 1 17c0-3 0-6 1-9z" fill="#e8601c" />
          <path d="M26 6c5 4 5 12 1 17-3 4-8 5-12 4 6 0 11-4 12-9 1-4 0-8-1-12z" fill="#fbd04a" />
        </svg>
      </button>
      <button aria-label="Document1 - Word" className={clsx(running, 'ml-[17px] from-[#ece7e3] to-[#9d8c83]')}>
        <svg width="26" height="32" viewBox="0 0 26 32" fill="none">
          <path d="M.5.500h19l6 6v25H.5z" fill="#fff" stroke="#777" />
          <path d="M19.500.500v6h6" fill="#ddd" stroke="#333" />
          <path d="M4.500 8.500h17v16h-17z" fill="#f3f1ea" stroke="#222" />
          <path d="M5 9h16v2.500H5z" fill="#00008b" />
          <path d="M15 10h1M17 10h1M19 10h1" stroke="#fff" />
          <path d="M7 14h2v3H7z" fill="#d22" />
          <path d="M9 16h2v2H9z" fill="#22b" />
          <path d="M12 14h2v3h-2z" fill="#22b" />
          <path d="M13 16h2v2h-2z" fill="#d22" />
          <path d="M16 14h3v4h-3z" fill="#292" />
          <path d="M7 20.500h3M12 20.500h3M16 20.500h3" stroke="#888" />
        </svg>
      </button>
      <button aria-label="Spotify" className={clsx(running, 'ml-1 from-[#ab9a90] to-[#6b5242]')}>
        <svg width="32" height="32" viewBox="0 0 32 32" fill="none" stroke="#191414" strokeLinecap="round">
          <circle cx="16" cy="16" r="16" fill="#1ed760" stroke="none" />
          <path d="M6.500 10.500c6-1.800 13.500-1.200 19 1.800" strokeWidth="3" />
          <path d="M7.500 16c5.500-1.500 11.500-1 16.500 2" strokeWidth="2.400" />
          <path d="M8.500 21c4.500-1 9.500-.6 13.500 1.800" strokeWidth="2" />
        </svg>
      </button>
      <button aria-label="Chrome window" className={clsx(running, 'ml-1 from-[#ab9a90] to-[#6b5242]')}><ChromeLogo /></button>
      <div className="ml-auto flex h-full items-center text-white">
        <button aria-label="Hidden icons">
          <svg width="8" height="4" viewBox="0 0 8 4"><path d="M4 0l4 4H0z" fill="#fff" /></svg>
        </button>
        <button aria-label="Volume" className="ml-[13px]">
          <svg width="16" height="14" viewBox="0 0 16 14" fill="none" stroke="#fff">
            <path d="M0 4h2v6H0zM3 4l4-4v14l-4-4z" fill="#fff" stroke="none" />
            <path d="M9 5c1 1 1 3 0 4M11 3.500c2 2 2 5 0 7M13 2c2.500 3 2.500 7 0 10" />
          </svg>
        </button>
        <div className="ml-[11px] flex w-[62px] flex-col text-center text-[12px] leading-[17px]">
          <span>1:20 PM</span>
          <span>1/3/2018</span>
        </div>
        <button aria-label="Show desktop" className="mt-px mr-px ml-1 h-[38px] w-[13px] border border-[#8a8583] bg-linear-to-b from-[#77706e] to-[#1e1b1b]" />
      </div>
    </footer>
  )
}

export default function App() {
  return (
    <div className="flex h-screen min-h-[600px] flex-col overflow-hidden bg-white font-['Open_Sans',sans-serif] text-[12px] text-[#444]">
      <header className="shrink-0">
        <TitleBar />
        <TabRow />
        <div className="flex h-[93px] border-b border-[#d4d4d4]">
          <ClipboardGroup />
          <FontGroup />
          <ParagraphGroup />
          <StylesGroup />
          <EditingGroups />
        </div>
      </header>
      <Document />
      <StatusBar />
      <Taskbar />
    </div>
  )
}
